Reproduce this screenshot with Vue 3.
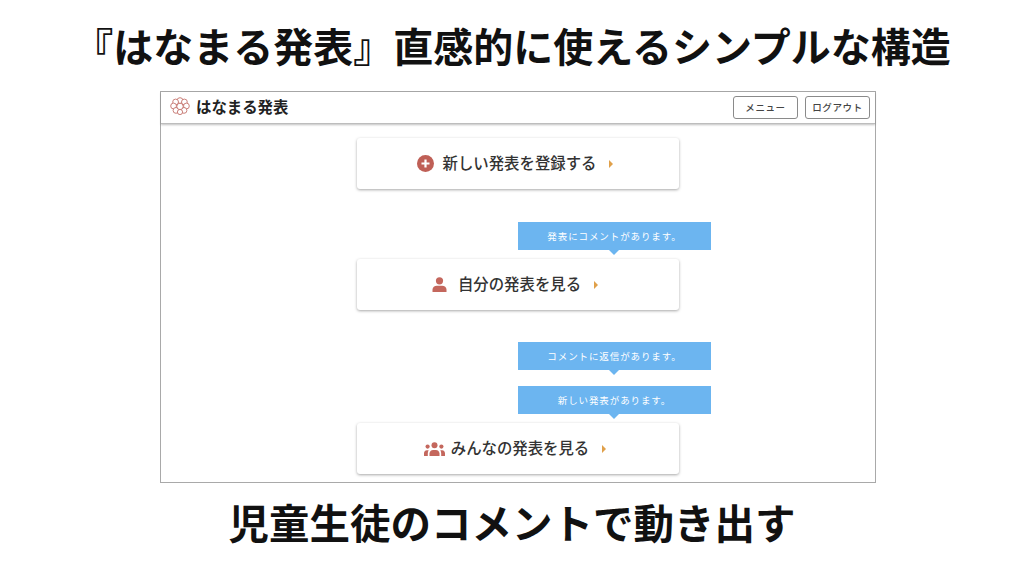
<script setup>
const cards = [
  { label: '新しい発表を登録する', icon: 'plus', tips: [] },
  { label: '自分の発表を見る', icon: 'user', tips: ['発表にコメントがあります。'] },
  { label: 'みんなの発表を見る', icon: 'users', tips: ['コメントに返信があります。', '新しい発表があります。'] }
]
const petals = [
  [10, 3.6, 2.9], [5.6, 5, 2.9], [14.4, 5, 2.9], [3.6, 9, 2.9], [16.4, 9, 2.9],
  [6, 13.4, 2.9], [14, 13.4, 2.9], [10, 15, 2.6], [10, 9.4, 3.2]
]
</script>

<template>
  <div class="slide">
    <h1 class="headline">『はなまる発表』直感的に使えるシンプルな構造</h1>

    <div class="panel">
      <header class="bar">
        <div class="brand">
          <svg class="logo" width="20" height="19" viewBox="0 0 20 19">
            <circle v-for="(p, i) in petals" :key="i" :cx="p[0]" :cy="p[1]" :r="p[2]" fill="#fff" stroke="#c4736c" stroke-width="0.9" />
          </svg>
          <span class="brand-name">はなまる発表</span>
        </div>
        <div class="actions">
          <button class="btn">メニュー</button>
          <button class="btn">ログアウト</button>
        </div>
      </header>

      <main class="cards">
        <div v-for="card in cards" :key="card.label" class="card" :class="'card-' + card.icon">
          <div v-if="card.tips.length" class="tips">
            <div v-for="tip in card.tips" :key="tip" class="tip">{{ tip }}</div>
          </div>
          <svg v-if="card.icon === 'plus'" width="17" height="17" viewBox="0 0 17 17">
            <circle cx="8.5" cy="8.5" r="8.5" fill="#bf5f56" />
            <path d="M8.5 4.5v8M4.5 8.5h8" stroke="#fff" stroke-width="2.2" />
          </svg>
          <svg v-else-if="card.icon === 'user'" width="15" height="15" viewBox="0 0 15 15">
            <circle cx="7.5" cy="3.8" r="3.6" fill="#c4675d" />
            <path d="M0.5 15v-2.2c0-2.4 2-4 4.4-4h5.2c2.4 0 4.4 1.6 4.4 4V15z" fill="#c4675d" />
          </svg>
          <svg v-else width="21" height="14" viewBox="0 0 21 14">
            <g fill="#c4675d">
              <circle cx="10.5" cy="3.2" r="3" />
              <circle cx="3.6" cy="4.6" r="2.1" />
              <circle cx="17.4" cy="4.6" r="2.1" />
              <path d="M5.5 14v-2.4c0-2 1.6-3.6 3.6-3.6h2.8c2 0 3.6 1.6 3.6 3.6V14z" />
              <path d="M0 14v-2.4c0-2 1-3.3 2.8-3.3h1.9c-.6.9-.9 2-.9 3.2V14z" />
              <path d="M21 14v-2.4c0-2-1-3.3-2.8-3.3h-1.9c.6.9.9 2 .9 3.2V14z" />
            </g>
          </svg>
          <span class="label">{{ card.label }}</span>
          <span class="arrow"></span>
        </div>
      </main>
    </div>

    <p class="footline">児童生徒のコメントで動き出す</p>
  </div>
</template>

<style>
html, body {
  margin: 0;
  background: #fff;
}
</style>

<style scoped>
.slide {
  width: 1024px;
  height: 576px;
  overflow: hidden;
  display: flex;
  flex-direction: column;
  align-items: center;
  font-family: "Noto Sans CJK JP", "Noto Sans", sans-serif;
  color: #111;
}

.headline {
  margin: 0;
  height: 91px;
  line-height: 90px;
  font-size: 40px;
  font-weight: 700;
  white-space: nowrap;
}

.panel {
  box-sizing: border-box;
  align-self: flex-start;
  margin-left: 160px;
  width: 716px;
  height: 392px;
  border: 1px solid #a9a9a9;
  background: #fff;
}

.bar {
  box-sizing: border-box;
  height: 32px;
  display: flex;
  align-items: center;
  justify-content: space-between;
  padding: 0 5px 0 9px;
  border-bottom: 1px solid #bdbdbd;
  box-shadow: 0 1px 2px rgba(0, 0, 0, 0.25);
}

.brand {
  display: flex;
  align-items: center;
  gap: 6px;
  margin-top: -2px;
}

.brand-name {
  font-size: 15.4px;
  line-height: 20px;
  font-weight: 700;
  color: #222;
  margin-top: -2px;
}

.actions {
  display: flex;
  gap: 7px;
}

.btn {
  box-sizing: border-box;
  width: 65px;
  height: 23px;
  padding: 0 0 2px;
  border: 1px solid #8a8a8a;
  border-radius: 3px;
  background: #fff;
  font-family: inherit;
  font-size: 9.5px;
  font-weight: 500;
  letter-spacing: 0.6px;
  color: #444;
}

.cards {
  display: flex;
  flex-direction: column;
  align-items: center;
  padding-top: 14px;
}

.card {
  position: relative;
  box-sizing: border-box;
  width: 322px;
  height: 51px;
  padding-right: 6px;
  display: flex;
  align-items: center;
  justify-content: center;
  border-radius: 3px;
  background: #fff;
  box-shadow: 0 1px 3px rgba(0, 0, 0, 0.35);
}

.card-user {
  margin-top: 70px;
}

.card-users {
  margin-top: 113px;
}

.card-plus svg {
  margin-right: 9px;
}

.card-user svg {
  margin-right: 11px;
}

.card-users svg {
  margin-right: 6px;
}

.label {
  font-size: 15.4px;
  line-height: 20px;
  font-weight: 500;
  color: #333;
  margin-top: -3px;
}

.arrow {
  width: 0;
  height: 0;
  margin-left: 13px;
  border-left: 4px solid #e0a04a;
  border-top: 4px solid transparent;
  border-bottom: 4px solid transparent;
}

.tips {
  position: absolute;
  left: 161px;
  bottom: 60px;
  display: flex;
  flex-direction: column;
  gap: 16px;
}

.tip {
  position: relative;
  width: 193px;
  height: 28px;
  line-height: 28px;
  text-align: center;
  font-size: 9.5px;
  letter-spacing: 0.9px;
  color: #fff;
  background: #6cb5f0;
}

.tip::after {
  content: "";
  position: absolute;
  top: 100%;
  left: 91px;
  border-left: 5px solid transparent;
  border-right: 5px solid transparent;
  border-top: 5px solid #6cb5f0;
}

.footline {
  margin: 0;
  height: 93px;
  line-height: 78px;
  font-size: 40.5px;
  font-weight: 700;
  white-space: nowrap;
}
</style>
